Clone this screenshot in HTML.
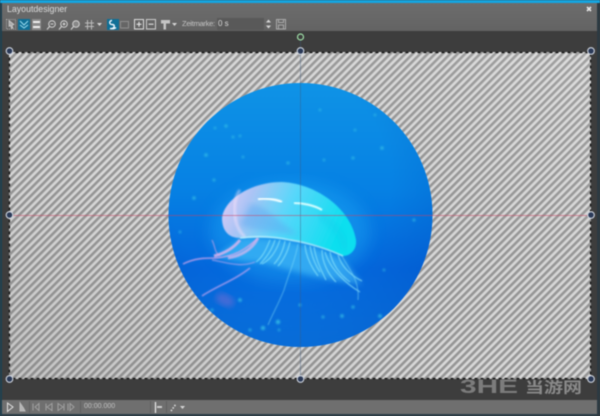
<!DOCTYPE html>
<html><head><meta charset="utf-8"><style>
html,body{margin:0;padding:0;background:#3d3d3d}
#r{position:relative;width:600px;height:416px;overflow:hidden;font-family:"Liberation Sans","Noto Sans CJK SC",sans-serif;filter:blur(.45px)}
#r>div{position:absolute}
</style></head><body><div id="r">
<div style="left:0;top:31px;width:600px;height:369px;background:#3d3d3d"></div>
<div style="left:0;top:0;width:600px;height:3px;background:#14a5e0"></div>
<div style="left:2px;top:3px;width:595px;height:28px;background:linear-gradient(#6c6c6c,#686868 50%,#636363)"></div>
<div style="left:2px;top:400px;width:595px;height:14px;background:#6f6f6f"></div>
<div style="left:0;top:414px;width:600px;height:2px;background:#2c3e48"></div>
<div style="left:0;top:3px;width:2px;height:413px;background:#1f4050"></div>
<div style="left:597px;top:3px;width:3px;height:413px;background:#2c3a42"></div>
<div style="left:7px;top:3px;font-size:8.8px;line-height:13px;color:#dcdcdc">Layoutdesigner</div>
<div style="left:182px;top:17px;font-size:7.6px;letter-spacing:-.3px;line-height:14px;color:#c4c4c4">Zeitmarke:</div>
<div style="left:217px;top:18px;width:47px;height:12px;background:#595959"></div>
<div style="left:218px;top:17px;font-size:8px;line-height:14px;color:#d8d8d8">0 s</div>
<div style="left:84px;top:400px;font-size:7px;line-height:14px;color:#c0c0c0">00:00.000</div>
<svg style="position:absolute;left:0;top:0" width="600" height="416" viewBox="0 0 600 416">
<defs>
<pattern id="st" width="5.3" height="5.3" patternUnits="userSpaceOnUse" patternTransform="rotate(45)">
<rect width="5.3" height="5.3" fill="#d8d8d8"/><rect width="2.6" height="5.3" fill="#959595"/>
</pattern>
<linearGradient id="sh" x1="1" y1="0" x2="0" y2="1"><stop offset="0" stop-color="#fff" stop-opacity=".12"/><stop offset=".6" stop-color="#888" stop-opacity="0"/><stop offset="1" stop-color="#777" stop-opacity=".22"/></linearGradient>
<linearGradient id="bg" x1="0" y1="0" x2="0" y2="1"><stop offset="0" stop-color="#0f93e6"/><stop offset=".4" stop-color="#0681e4"/><stop offset=".7" stop-color="#0467dc"/><stop offset="1" stop-color="#0a76e0"/></linearGradient>
<radialGradient id="vg" cx=".42" cy=".38" r=".7"><stop offset=".6" stop-color="#0040b0" stop-opacity="0"/><stop offset="1" stop-color="#0040b0" stop-opacity=".25"/></radialGradient>
<linearGradient id="bell" x1="0" y1="0" x2="1" y2=".25"><stop offset="0" stop-color="#f2d0f6"/><stop offset=".25" stop-color="#b4c8f6"/><stop offset=".55" stop-color="#5cdcfb"/><stop offset="1" stop-color="#0ce4f0"/></linearGradient>
<filter id="b1"><feGaussianBlur stdDeviation="1"/></filter>
<filter id="b05"><feGaussianBlur stdDeviation=".5"/></filter>
<filter id="b3"><feGaussianBlur stdDeviation="3"/></filter>
<filter id="b8"><feGaussianBlur stdDeviation="8"/></filter>
<clipPath id="cc"><circle cx="300.5" cy="215" r="132"/></clipPath>
</defs>
<rect x="9" y="52" width="582" height="327" fill="url(#st)"/>
<rect x="9" y="52" width="582" height="327" fill="url(#sh)"/>
<g clip-path="url(#cc)">
<rect x="168" y="83" width="265" height="264" fill="url(#bg)"/>
<rect x="168" y="83" width="265" height="264" fill="url(#vg)"/>
<ellipse cx="290" cy="232" rx="80" ry="50" fill="#20b0f8" opacity=".4" filter="url(#b8)"/>
<g fill="#3cc8e8" filter="url(#b1)" opacity=".8">
<circle cx="206" cy="155" r="1.6"/><circle cx="226" cy="126" r="1.5"/><circle cx="233" cy="137" r="1.3"/><circle cx="240" cy="136" r="1.2"/><circle cx="288" cy="163" r="1.4"/><circle cx="243" cy="157" r="1.2"/><circle cx="324" cy="160" r="1.2"/><circle cx="353" cy="158" r="1.4"/><circle cx="382" cy="148" r="1.6"/><circle cx="214" cy="180" r="1.4"/><circle cx="194" cy="198" r="1.6"/><circle cx="414" cy="220" r="1.4"/><circle cx="240" cy="300" r="1.8"/><circle cx="212" cy="310" r="1.4"/><circle cx="278" cy="322" r="2.2"/><circle cx="263" cy="328" r="2"/><circle cx="250" cy="330" r="1.4"/><circle cx="279" cy="330" r="1.2"/><circle cx="323" cy="317" r="1.4"/><circle cx="342" cy="316" r="1.7"/><circle cx="380" cy="316" r="1.8"/><circle cx="353" cy="307" r="1.5"/><circle cx="300" cy="305" r="1.4"/><circle cx="384" cy="270" r="1.2"/><circle cx="180" cy="232" r="1.2"/><circle cx="320" cy="110" r="1.2"/><circle cx="355" cy="130" r="1.2"/><circle cx="375" cy="115" r="1.2"/><circle cx="215" cy="128" r="1.2"/>
</g>
<ellipse cx="225" cy="300" rx="10" ry="6" fill="#b070d0" opacity=".35" filter="url(#b3)" transform="rotate(25 225 300)"/>
<path d="M240,238 C270,236 320,245 345,262 C352,272 360,282 362,284 C330,282 290,270 260,262 C240,262 222,258 214,256 C226,250 235,244 240,238Z" fill="#50c8fb" opacity=".55" filter="url(#b3)"/>
<g fill="none" filter="url(#b05)">
<path d="M258,238 C245,250 235,256 216,258 C205,258 195,258 183,264" stroke="#d8a8ec" stroke-width="1.4" opacity=".8"/>
<path d="M250,268 C235,280 215,287 202,296" stroke="#b8a0f0" stroke-width="1.6" opacity=".8"/>
<path d="M255,262 C240,268 225,262 212,260" stroke="#c0a8f0" stroke-width="1.2" opacity=".7"/>
<path d="M240,240 C232,250 222,254 214,256" stroke="#f0b8ee" stroke-width="3" opacity=".75"/>
<path d="M258,238 C252,250 240,256 228,258" stroke="#f0b8ee" stroke-width="3" opacity=".65"/>
<path d="M212,240 C216,248 214,252 220,256" stroke="#e8a8e8" stroke-width="1" opacity=".7"/>
</g>
<g fill="none" stroke="#90e8fc" stroke-width="1" opacity=".85" filter="url(#b05)">
<path d="M270,240 C266,250 262,258 256,262"/><path d="M275,240 C272,250 266,258 260,264"/><path d="M280,240 C276,252 270,260 262,264"/><path d="M285,241 C283,252 278,260 274,264"/><path d="M290,242 C288,252 282,262 278,266"/><path d="M298,244 C296,258 290,270 284,290 C278,305 272,315 268,325" opacity=".6"/><path d="M305,245 C306,258 312,268 318,276"/><path d="M310,246 C312,258 316,266 320,272"/><path d="M314,247 C316,260 322,272 326,280"/><path d="M322,250 C322,262 328,274 336,282"/><path d="M330,252 C332,264 340,275 350,282"/><path d="M338,255 C342,268 352,276 362,281 "/><path d="M342,256 C348,268 360,280 358,300" opacity=".6"/><path d="M325,252 C330,270 348,285 360,292"/>
</g>
<path d="M222,218 C224,200 250,182 282,182 C320,184 352,212 356,240 C357,250 350,256 343,256 C330,250 312,243 290,240 C270,236 250,238 240,238 C228,238 222,230 222,218Z" fill="url(#bell)" filter="url(#b05)" opacity=".95"/>
<path d="M240,190 C232,200 232,225 245,237" fill="none" stroke="#fbe4fa" stroke-width="3" opacity=".5" filter="url(#b1)"/>
<path d="M250,205 C265,202 280,225 300,235 C270,232 250,230 240,225Z" fill="#5fa8f0" opacity=".5" filter="url(#b3)"/>
<path d="M258,199 C265,198 275,199 282,202" fill="none" stroke="#f4ffff" stroke-width="2.2" filter="url(#b05)"/>
<path d="M294,203 C302,203 314,205 322,210" fill="none" stroke="#dcffff" stroke-width="2" filter="url(#b05)"/>
<path d="M240,238 C255,236 272,236 290,240 C310,243 330,250 343,256" fill="none" stroke="#c8f8ff" stroke-width="1.4" opacity=".85" filter="url(#b05)"/>
<path d="M320,215 C335,225 345,238 345,250" fill="none" stroke="#10c8e8" stroke-width="6" opacity=".35" filter="url(#b3)"/>
</g>
<rect x="9.5" y="52.5" width="581" height="326" fill="none" stroke="#111" stroke-width="1.2" stroke-dasharray="3 3"/>
<line x1="300.5" y1="37" x2="300.5" y2="379" stroke="#3d5a80" stroke-width="1" opacity=".4"/>
<line x1="9" y1="215.5" x2="591" y2="215.5" stroke="#d04060" stroke-width="1" opacity=".5"/>
<circle cx="300.5" cy="37" r="3" fill="#3d3d3d" stroke="#9fe0a8" stroke-width="1.2"/>
<g fill="#2b3a58" stroke="#d0d6e0" stroke-width="1.1">
<circle cx="9.5" cy="51" r="3.3"/><circle cx="300.5" cy="51" r="3.3"/><circle cx="591" cy="51" r="3.3"/>
<circle cx="9.5" cy="215" r="3.3"/><circle cx="591" cy="215" r="3.3"/>
<circle cx="9.5" cy="379" r="3.3"/><circle cx="300.5" cy="379" r="3.3"/><circle cx="591" cy="379" r="3.3"/>
</g>
<path d="M587,7l4,4m0,-4l-4,4" stroke="#e8e8e8" stroke-width="1.6" fill="none"/>
<!-- top toolbar -->
<rect x="18" y="19" width="12" height="11" fill="#0f6f96"/>
<rect x="107" y="19" width="12" height="11" fill="#0f6f96"/>
<rect x="32" y="19" width="9" height="11" fill="#8c8c8c"/>
<g fill="none" stroke="#d4d4d4" stroke-width="1">
<rect x="6.500" y="19.500" width="9" height="9.500" stroke="#aaa" stroke-dasharray="1 1"/>
<path d="M9,20.500l5,4-2,1 1,2.500-1.500,.5-1-3-1.500,1z" fill="#aaa" stroke="#ddd" stroke-width=".6"/>
<path d="M20,21l4,4 4-4M20,25l4,3 4-3" stroke="#9adcf0"/>
<path d="M33,22h7M33,27h7" stroke="#eee" stroke-width="2"/>
<circle cx="52" cy="24" r="3.300"/><path d="M49.500,26.500l-2.500,3M50.500,24h3"/>
<circle cx="64" cy="24" r="3.300"/><path d="M61.500,26.500l-2.500,3M62.500,24h3M64,22.500v3"/>
<circle cx="76" cy="24" r="3.300" fill="#aaa" fill-opacity=".5"/><path d="M73.500,26.500l-2.500,3"/>
<path d="M85,23h9M85,26.500h9M87.500,20v9.500M91.500,20v9.500" stroke="#bbb"/>
<path d="M112,20.500c-3,0-3,4 0,4s3,3 0,4M110,28.500c3,.5 5,0 6-1" stroke="#f0f8ff" stroke-width="1.400"/>
<rect x="120.500" y="21.500" width="8" height="6.500" stroke="#8f8f8f"/>
<rect x="134.500" y="19.500" width="9" height="9.500" stroke="#ddd"/><path d="M136.500,24.200h5M139,21.700v5" stroke="#eee"/>
<rect x="146.500" y="19.500" width="9" height="9.500" stroke="#ccc"/><path d="M148.500,24.200h5" stroke="#eee"/>
<path d="M161,20h9v3.500h-4v6h-2.500v-6h-2.500z" fill="#c4c4c4" stroke="none"/>
<rect x="276.500" y="19.500" width="9" height="9.500" stroke="#aaa"/><rect x="278.500" y="19.500" width="5" height="3" stroke="#aaa"/><rect x="278.500" y="25" width="5" height="4" stroke="#aaa"/>
</g>
<g fill="#d4d4d4">
<path d="M97,23h5l-2.500,3z"/><path d="M172,23h5l-2.500,3z"/>
<path d="M266,22.500l2.500-3 2.500,3z"/><path d="M266,25.500l2.500,3 2.500-3z"/>
<path d="M180,406h5l-2.500,3z"/>
</g>
<!-- bottom toolbar -->
<g fill="none" stroke="#c8c8c8" stroke-width="1">
<path d="M7.500,403l5.500,4-5.500,4.500z" stroke="#e4e4e4"/>
<path d="M20,403v8h5l-1.500-3z" fill="#b4b4b4" stroke="#bbb"/>
<g stroke="#a0a0a0"><path d="M39,403.500l-4,3.500 4,3.500zM33,403.500v7"/><path d="M52,403.500l-5,3.500 5,3.500zM46,403.500v7"/><path d="M58,403.500l5,3.500-5,3.500zM64,403.500v7"/><path d="M70,403.500l4,3.500-4,3.500zM68,403.500v7"/></g>
<path d="M155.500,402v11" stroke="#eee" stroke-width="1.200"/>
<path d="M157,407h5" stroke="#ccc" stroke-width="2"/>
<path d="M171,411l5-7" stroke="#ddd" stroke-dasharray="1.500 1.500" stroke-width="1.600"/>
</g>
<g stroke="#606060" stroke-width="1"><path d="M29.500,401v12M80.500,401v12M150.500,401v12M166.500,401v12"/></g>
<!-- watermark -->
<text x="460" y="393" font-size="19" font-weight="bold" fill="#7c7c7c" textLength="58" lengthAdjust="spacingAndGlyphs" font-family="'Liberation Sans',sans-serif">3HE</text>
<text x="525" y="392.500" font-size="15" font-weight="bold" fill="#8a8a8a" textLength="57" lengthAdjust="spacingAndGlyphs" font-family="'Liberation Sans','Noto Sans CJK SC',sans-serif">当游网</text>
</svg>
</div></body></html>
